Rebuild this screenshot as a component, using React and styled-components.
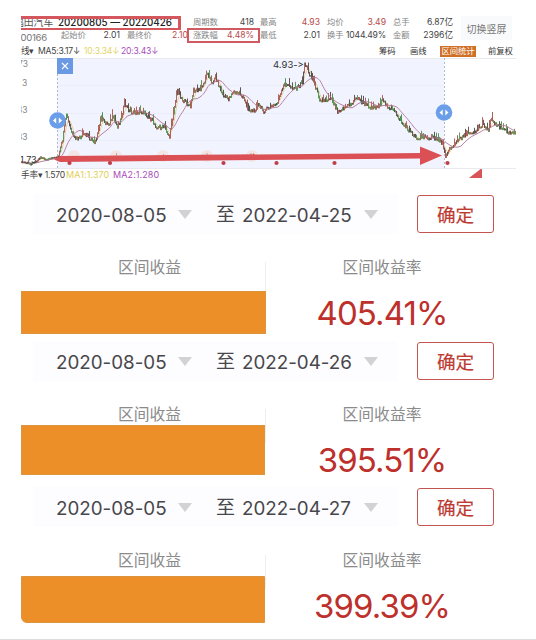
import React from "react";
import styled, { createGlobalStyle } from "styled-components";

const Global = createGlobalStyle`
  * { box-sizing: border-box; }
  body {
    margin: 0;
    background: #fff;
    font-family: Inter, "Noto Sans CJK SC", sans-serif;
    font-feature-settings: "calt" 0;
    color: #444;
  }
`;

const Page = styled.main`
  width: 536px;
  height: 640px;
  overflow: hidden;
  display: flex;
  flex-direction: column;
  padding: 16px 0 0 21px;
  border-bottom: 1px solid #dcdcdc;
`;

const Header = styled.header`
  display: flex;
  height: 28px;
  width: 515px;
`;

const TitleBlock = styled.div`
  width: 166px;
  height: 28px;
  overflow: hidden;
`;

const TitleLine = styled.div`
  display: flex;
  height: 14px;
  width: 160px;
  overflow: hidden;
  border: solid #d4575d;
  border-width: 3px 3px 2px 0;
  font-size: 9.8px;
  line-height: 8px;
  color: #222;
  white-space: nowrap;
`;

const StockName = styled.span`
  flex: none;
  width: 44px;
  margin-left: -7px;
  color: #555;
`;

const Period = styled.span`
  font-weight: 500;
`;

const CodeLine = styled.div`
  display: grid;
  grid-template-columns: 40px 25px 34px 7px 25px 36px;
  height: 14px;
  line-height: 11px;
  font-size: 8.3px;
  white-space: nowrap;
`;

const Code = styled.span`
  font-size: 9.6px;
  line-height: 15px;
  letter-spacing: -0.35px;
  margin-left: -6px;
  color: #777;
`;

const Metrics = styled.div`
  display: grid;
  grid-template-columns: ${(p) => p.$cols};
  grid-template-rows: 13px 13px;
  margin-left: 6px;
  font-size: 8.3px;
  line-height: 13px;
  white-space: nowrap;
`;

const Label = styled.span`
  color: #858585;
  grid-column: ${(p) => p.$col || "auto"};
`;

const Num = styled.span`
  color: ${(p) => (p.$up ? "#b84a4a" : "#444")};
  text-align: right;
  font-size: 8.6px;
  letter-spacing: ${(p) => (p.$tight ? "-0.2px" : "0")};
`;

const Highlight = styled.div`
  position: absolute;
  left: 187px;
  top: 28px;
  width: 73px;
  height: 15px;
  border: 2px solid #cf5a61;
`;

const RotateButton = styled.button`
  width: 51px;
  height: 24px;
  margin-left: 8px;
  padding: 0;
  border: 0;
  background: #f9fafc;
  color: #777;
  font: 10px "Noto Sans CJK SC", sans-serif;
`;

const Toolbar = styled.div`
  display: flex;
  align-items: center;
  height: 14px;
  font-size: 8.3px;
  line-height: 14px;
  white-space: nowrap;
`;

const MaItem = styled.span`
  flex: none;
  width: ${(p) => p.$w}px;
  color: ${(p) => p.$c};
  font-size: ${(p) => p.$s || 8.6}px;
  letter-spacing: ${(p) => p.$ls || -0.2}px;
`;

const Tools = styled.div`
  display: flex;
  align-items: center;
  margin-left: ${(p) => p.$gap}px;
  color: #333;
  font-size: 8.3px;
`;

const Tool = styled.span`
  width: ${(p) => p.$w}px;
`;

const ActiveTool = styled.span`
  width: 36px;
  height: 11px;
  margin-right: 12px;
  line-height: 10px;
  text-align: center;
  background: #cf7026;
  color: #fff;
`;

const Chart = styled.svg`
  display: block;
  flex: none;
  width: 515px;
  height: 111px;
`;

const Footer = styled.div`
  display: flex;
  height: 21px;
  line-height: 12px;
  white-space: nowrap;
`;

const Corner = styled.svg`
  width: 14px;
  height: 10px;
  margin-left: 307px;
`;

const Panel = styled.section`
  flex: none;
  height: ${(p) => p.$h}px;
`;

const DateRow = styled.div`
  display: flex;
  height: 48px;
  align-items: center;
`;

const DateRange = styled.div`
  display: flex;
  align-items: center;
  width: 365px;
  height: 40px;
  margin-left: 12px;
  padding: 2px 0 0 23px;
  background: #fdfcfe;
  color: #47474b;
  font-size: 18.8px;
  white-space: nowrap;
`;

const DateText = styled.span`
  width: 122px;
`;

const To = styled.span`
  width: 26px;
  margin-left: 24px;
  font-size: 19px;
  line-height: 24px;
`;

const Arrow = styled.svg`
  width: 14px;
  height: 10px;
`;

const Confirm = styled.button`
  width: 77px;
  height: 38px;
  margin-left: 19px;
  padding: 0 0 1px;
  border: 1.6px solid #c45450;
  border-radius: 3px;
  background: #fff;
  color: #bd3b33;
  font: 400 18.6px "Noto Sans CJK SC", sans-serif;
  -webkit-text-stroke: 0.2px #bd3b33;
`;

const Stats = styled.div`
  display: grid;
  grid-template-columns: 245px 232px;
`;

const Cell = styled.div`
  display: flex;
  flex-direction: column;
  align-items: center;
  padding-top: 18px;
`;

const Caption = styled.div`
  height: 22px;
  line-height: 24px;
  font-size: 15.8px;
  color: #8b8b8b;
  padding-left: ${(p) => p.$shift || 0}px;
`;

const LeftCell = styled(Cell)`
  background: linear-gradient(#eeeeee, #eeeeee) 244px 24px / 1px 34px no-repeat;
`;

const Bar = styled.div`
  width: ${(p) => p.$w}px;
  align-self: flex-start;
  height: ${(p) => p.$h}px;
  margin-top: ${(p) => p.$top}px;
  background: #ec8f29;
  border: 1px solid #dc943f;
  border-bottom-left-radius: ${(p) => (p.$round ? 6 : 0)}px;
`;

const Rate = styled.div`
  margin-top: 14px;
  height: 42px;
  line-height: 42px;
  font-size: 33px;
  letter-spacing: -0.9px;
  color: #bd302b;
`;

const KEYS = [
  [21,162],[30,164],[35,162],[40,157],[46,160],[52,158],[58,157],[62,140],[66,114],[69,126],
  [73,138],[78,139],[83,135],[88,137],[94,142],[98,132],[100,118],[104,122],[108,124],[112,118],
  [117,126],[120,120],[124,104],[129,111],[133,113],[143,112],[150,119],[157,128],[164,127],
  [169,137],[172,118],[177,90],[182,100],[190,107],[193,90],[200,90],[203,84],[207,72],[211,84],
  [215,76],[217,82],[222,95],[228,99],[232,92],[240,94],[244,101],[248,110],[253,111],[258,105],
  [263,111],[270,107],[276,104],[279,97],[284,84],[290,87],[297,88],[302,82],[304,63],[310,76],
  [314,84],[319,99],[325,101],[330,97],[337,111],[345,107],[351,104],[356,97],[362,103],[370,107],
  [377,107],[382,101],[388,107],[395,113],[403,125],[412,134],[418,139],[424,137],[432,138],
  [438,140],[442,143],[445,155],[450,148],[458,140],[465,134],[475,131],[483,124],[488,131],
  [490,119],[497,125],[503,130],[509,132],[516,132],
];

const noise = (n) => {
  const v = Math.sin(n * 12.9898) * 43758.5453;
  return v - Math.floor(v) - 0.5;
};

const prices = [];
for (let i = 0; i < KEYS.length - 1; i++) {
  const [x0, y0] = KEYS[i];
  const [x1, y1] = KEYS[i + 1];
  for (let x = x0; x < x1; x++) {
    const base = y0 + ((y1 - y0) * (x - x0)) / (x1 - x0);
    prices.push([x, base + noise(x) * (x < 58 ? 1 : 4)]);
  }
}

const average = (span) =>
  prices.map(([x], i) => {
    const part = prices.slice(Math.max(0, i - span + 1), i + 1);
    return `${x},${(part.reduce((s, p) => s + p[1], 0) / part.length).toFixed(1)}`;
  }).join(" ");

const CANDLES = ["#2f7a35", "#33332e", "#96402f", "#3f8434", "#4a2f2c"];

function PriceChart() {
  return (
    <Chart viewBox="21 58 515 111">
      <rect x="57" y="58" width="387" height="110" fill="#f1f4fe" />
      <path d="M21 58.5H516M21 168.5H516" stroke="#e8eaf0" />
      <path d="M57 140.5H444M57 113.5H444M57 85.5H444" stroke="#eaedfa" />
      <path d="M57.5 58V168M444.5 58V168" stroke="#9ba8c6" strokeDasharray="2 2" strokeWidth=".8" />
      <g fontSize="8.5" fill="#888">
        <text x="18" y="67">73</text>
        <text x="22" y="86">3</text>
        <text x="17" y="113">33</text>
        <text x="17" y="140">33</text>
      </g>
      <g fill="#f6d8ce" opacity=".5">
        {[74, 116, 163, 207, 252].map((x) => <circle key={x} cx={x} cy="156" r="6" />)}
      </g>
      <path d="M116.500 153v4M163.500 154v3M207 153v4M251 153v4M253.500 153v4" stroke="#a88" strokeWidth=".7" />
      <polyline points={average(6)} fill="none" stroke="#dcc98e" strokeWidth=".8" />
      {prices.map(([x, y], i) => {
        const spike = x < 58 ? 0 : Math.max(0, noise(x + 7) - 0.15) * 18;
        const prev = i ? prices[i - 1][1] : y;
        const top = Math.max(59.5, Math.min(y, prev) - 0.8 - spike);
        const rising = y < prev - 1 && x % 3;
        return (
          <path
            key={x}
            d={`M${x + 0.5} ${top.toFixed(1)}V${(Math.max(y, prev) + 1).toFixed(1)}`}
            stroke={rising ? "#a04436" : CANDLES[Math.floor((noise(x + 31) + 0.5) * 5)]}
            strokeWidth=".95"
            opacity=".85"
          />
        );
      })}
      <polyline points={average(18)} fill="none" stroke="#b27596" strokeWidth=".9" />
      <text x="273" y="67.500" fontSize="9.500" fill="#333">4.93-&gt;</text>
      <text x="20" y="163" fontSize="9" fill="#333">1.73</text>
      <path d="M54 159.500 60 156 420 153V146.500L442 155.500 420 165V158.500L60 162Z" fill="#db5054" />
      <g fill="#be3f4a">
        {[69.5, 110, 223.5, 276.5, 334.5, 447.5].map((x) => <circle key={x} cx={x} cy="163" r="2.100" />)}
      </g>
      <rect x="57" y="58" width="16" height="16" fill="#6b99e3" />
      <path d="M62 63 68 69M68 63 62 69" stroke="#fff" strokeWidth="1.100" />
      {[57.5, 444].map((x, i) => (
        <g key={x} transform={`translate(${x} ${i ? 112.5 : 120.5})`}>
          <circle r="8.300" fill="#6b9ee9" />
          <path d="M-1.300-3V3L-4.500 0ZM1.300-3V3L4.500 0Z" fill="#fff" />
        </g>
      ))}
    </Chart>
  );
}

const PANELS = [
  { end: "2022-04-25", rate: "405.41%", height: 147, bar: [245, 43, 13] },
  { end: "2022-04-26", rate: "395.51%", height: 146, bar: [244, 50, 0] },
  { end: "2022-04-27", rate: "399.39%", height: 147, bar: [244, 47, 5], round: true },
];

const DownArrow = () => (
  <Arrow viewBox="0 0 14 10"><path d="M0 0H14L7 9Z" fill="#d2d1d3" /></Arrow>
);

export default function App() {
  return (
    <>
      <Global />
      <Page>
        <Header>
          <TitleBlock>
            <TitleLine>
              <StockName>福田汽车</StockName>
              <Period>20200805 — 20220426</Period>
            </TitleLine>
            <CodeLine>
              <Code>600166</Code>
              <Label>起始价</Label><Num>2.01</Num>
              <Label $col="5">最终价</Label><Num $up>2.10</Num>
            </CodeLine>
          </TitleBlock>
          <Metrics $cols="25px 36px 6px 17px 43px 7px 17px 42px 7px 17px 43px">
            <Label $col="1">周期数</Label><Num>418</Num>
            <Label $col="4">最高</Label><Num $up>4.93</Num>
            <Label $col="7">均价</Label><Num $up>3.49</Num>
            <Label $col="10">总手</Label><Num>6.87亿</Num>
            <Label $col="1">涨跌幅</Label><Num $up>4.48%</Num>
            <Label $col="4">最低</Label><Num>2.01</Num>
            <Label $col="7">换手</Label><Num $tight>1044.49%</Num>
            <Label $col="10">金额</Label><Num>2396亿</Num>
          </Metrics>
          <RotateButton>切换竖屏</RotateButton>
        </Header>
        <Highlight />
        <Toolbar>
          <MaItem $w={17} $c="#444">线▾</MaItem>
          <MaItem $w={46} $c="#444">MA5:3.17↓</MaItem>
          <MaItem $w={37} $c="#e3d568">10:3.34↓</MaItem>
          <MaItem $w={38} $c="#a94db9">20:3.43↓</MaItem>
          <Tools $gap={220}>
            <Tool $w={31}>筹码</Tool>
            <Tool $w={30}>画线</Tool>
            <ActiveTool>区间统计</ActiveTool>
            <Tool $w={26}>前复权</Tool>
          </Tools>
        </Toolbar>
        <PriceChart />
        <Footer>
          <MaItem $w={45} $c="#444" $s={8.6}>手率▾ 1.570</MaItem>
          <MaItem $w={47} $c="#dfcf55" $s={9} $ls={0.1}>MA1:1.370</MaItem>
          <MaItem $w={48} $c="#a94db9" $s={9} $ls={0.1}>MA2:1.280</MaItem>
          <Corner viewBox="0 0 14 10"><path d="M1 9H14V-1Z" fill="#d95358" /></Corner>
        </Footer>
        {PANELS.map((p) => (
          <Panel key={p.end} $h={p.height}>
            <DateRow>
              <DateRange>
                <DateText>2020-08-05</DateText><DownArrow />
                <To>至</To>
                <DateText>{p.end}</DateText><DownArrow />
              </DateRange>
              <Confirm>确定</Confirm>
            </DateRow>
            <Stats>
              <LeftCell>
                <Caption $shift={12}>区间收益</Caption>
                <Bar $w={p.bar[0]} $h={p.bar[1]} $top={p.bar[2]} $round={p.round} />
              </LeftCell>
              <Cell>
                <Caption>区间收益率</Caption>
                <Rate>{p.rate}</Rate>
              </Cell>
            </Stats>
          </Panel>
        ))}
      </Page>
    </>
  );
}
